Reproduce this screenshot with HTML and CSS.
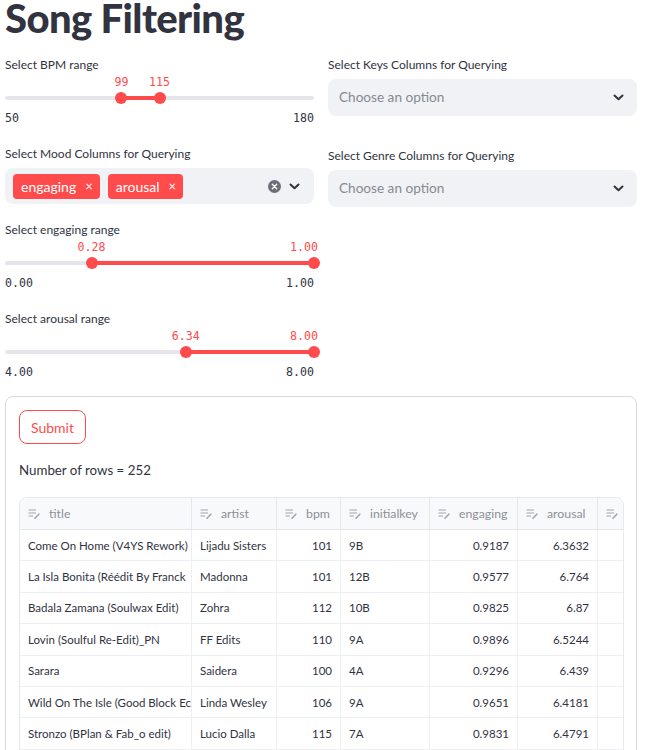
FILE: index.html
```html
<!DOCTYPE html>
<html>
<head>
<meta charset="utf-8">
<link rel="stylesheet" href="styles.css">
</head>
<body>
<div class="page">
  <h1 class="title">Song Filtering</h1>
  <div class="cols">
    <div class="col">
      <div class="slider-block first">
        <div class="label">Select BPM range</div>
        <div class="slider">
          <div class="track"><div class="fill" style="left:37.69%;width:12.31%"></div></div>
          <span class="val" style="left:37.69%">99</span>
          <span class="val" style="left:50%">115</span>
          <span class="thumb" style="left:37.69%"></span>
          <span class="thumb" style="left:50%"></span>
        </div>
        <div class="minmax"><span>50</span><span>180</span></div>
      </div>

      <div class="label mood-label">Select Mood Columns for Querying</div>
      <div class="multiselect">
        <div class="tags">
          <span class="tag">engaging<span class="x">×</span></span>
          <span class="tag">arousal<span class="x">×</span></span>
        </div>
        <div class="ms-icons">
          <span class="clear">
            <svg width="13" height="13" viewBox="0 0 13 13"><circle cx="6.5" cy="6.5" r="6.5" fill="#6c6e78"/><path d="M4.3 4.3 L8.7 8.7 M8.7 4.3 L4.3 8.7" stroke="#fff" stroke-width="1.4" stroke-linecap="round"/></svg>
          </span>
          <svg class="chev" width="11" height="7" viewBox="0 0 11 7"><path d="M1.5 1.5 L5.5 5.3 L9.5 1.5" fill="none" stroke="#31333f" stroke-width="2" stroke-linecap="round" stroke-linejoin="round"/></svg>
        </div>
      </div>

      <div class="slider-block eng">
        <div class="label">Select engaging range</div>
        <div class="slider">
          <div class="track"><div class="fill" style="left:28%;width:72%"></div></div>
          <span class="val" style="left:28%">0.28</span>
          <span class="val val-end">1.00</span>
          <span class="thumb" style="left:28%"></span>
          <span class="thumb" style="left:100%"></span>
        </div>
        <div class="minmax"><span>0.00</span><span>1.00</span></div>
      </div>

      <div class="slider-block aro">
        <div class="label">Select arousal range</div>
        <div class="slider">
          <div class="track"><div class="fill" style="left:58.5%;width:41.5%"></div></div>
          <span class="val" style="left:58.5%">6.34</span>
          <span class="val val-end">8.00</span>
          <span class="thumb" style="left:58.5%"></span>
          <span class="thumb" style="left:100%"></span>
        </div>
        <div class="minmax"><span>4.00</span><span>8.00</span></div>
      </div>
    </div>

    <div class="col">
      <div class="label keys-label">Select Keys Columns for Querying</div>
      <div class="select">
        <span class="placeholder">Choose an option</span>
        <svg class="chev" width="11" height="7" viewBox="0 0 11 7"><path d="M1.5 1.5 L5.5 5.3 L9.5 1.5" fill="none" stroke="#31333f" stroke-width="2" stroke-linecap="round" stroke-linejoin="round"/></svg>
      </div>
      <div class="label genre-label">Select Genre Columns for Querying</div>
      <div class="select">
        <span class="placeholder">Choose an option</span>
        <svg class="chev" width="11" height="7" viewBox="0 0 11 7"><path d="M1.5 1.5 L5.5 5.3 L9.5 1.5" fill="none" stroke="#31333f" stroke-width="2" stroke-linecap="round" stroke-linejoin="round"/></svg>
      </div>
    </div>
  </div>

  <div class="form">
    <button class="submit">Submit</button>
    <div class="rows-count">Number of rows = 252</div>
    <div class="grid">
      <div class="row head">
        <div class="c"><svg class="ic" width="12" height="10" viewBox="0 0 12 10"><path d="M0.5 1 H8 M0.5 4 H8 M0.5 7 H5" stroke="#a3a5ad" stroke-width="1.2"/><path d="M7 9.3 L10.8 5.2" stroke="#a3a5ad" stroke-width="1.6" stroke-linecap="round"/></svg>title</div>
        <div class="c"><svg class="ic" width="12" height="10" viewBox="0 0 12 10"><path d="M0.5 1 H8 M0.5 4 H8 M0.5 7 H5" stroke="#a3a5ad" stroke-width="1.2"/><path d="M7 9.3 L10.8 5.2" stroke="#a3a5ad" stroke-width="1.6" stroke-linecap="round"/></svg>artist</div>
        <div class="c"><svg class="ic" width="12" height="10" viewBox="0 0 12 10"><path d="M0.5 1 H8 M0.5 4 H8 M0.5 7 H5" stroke="#a3a5ad" stroke-width="1.2"/><path d="M7 9.3 L10.8 5.2" stroke="#a3a5ad" stroke-width="1.6" stroke-linecap="round"/></svg>bpm</div>
        <div class="c"><svg class="ic" width="12" height="10" viewBox="0 0 12 10"><path d="M0.5 1 H8 M0.5 4 H8 M0.5 7 H5" stroke="#a3a5ad" stroke-width="1.2"/><path d="M7 9.3 L10.8 5.2" stroke="#a3a5ad" stroke-width="1.6" stroke-linecap="round"/></svg>initialkey</div>
        <div class="c"><svg class="ic" width="12" height="10" viewBox="0 0 12 10"><path d="M0.5 1 H8 M0.5 4 H8 M0.5 7 H5" stroke="#a3a5ad" stroke-width="1.2"/><path d="M7 9.3 L10.8 5.2" stroke="#a3a5ad" stroke-width="1.6" stroke-linecap="round"/></svg>engaging</div>
        <div class="c"><svg class="ic" width="12" height="10" viewBox="0 0 12 10"><path d="M0.5 1 H8 M0.5 4 H8 M0.5 7 H5" stroke="#a3a5ad" stroke-width="1.2"/><path d="M7 9.3 L10.8 5.2" stroke="#a3a5ad" stroke-width="1.6" stroke-linecap="round"/></svg>arousal</div>
        <div class="c"><svg class="ic" width="12" height="10" viewBox="0 0 12 10"><path d="M0.5 1 H8 M0.5 4 H8 M0.5 7 H5" stroke="#a3a5ad" stroke-width="1.2"/><path d="M7 9.3 L10.8 5.2" stroke="#a3a5ad" stroke-width="1.6" stroke-linecap="round"/></svg></div>
      </div>
      <div class="row"><div class="c">Come On Home (V4YS Rework)</div><div class="c">Lijadu Sisters</div><div class="c num">101</div><div class="c">9B</div><div class="c num">0.9187</div><div class="c num">6.3632</div><div class="c"></div></div>
      <div class="row"><div class="c">La Isla Bonita (Réédit By Franck</div><div class="c">Madonna</div><div class="c num">101</div><div class="c">12B</div><div class="c num">0.9577</div><div class="c num">6.764</div><div class="c"></div></div>
      <div class="row"><div class="c">Badala Zamana (Soulwax Edit)</div><div class="c">Zohra</div><div class="c num">112</div><div class="c">10B</div><div class="c num">0.9825</div><div class="c num">6.87</div><div class="c"></div></div>
      <div class="row"><div class="c">Lovin (Soulful Re-Edit)_PN</div><div class="c">FF Edits</div><div class="c num">110</div><div class="c">9A</div><div class="c num">0.9896</div><div class="c num">6.5244</div><div class="c"></div></div>
      <div class="row"><div class="c">Sarara</div><div class="c">Saidera</div><div class="c num">100</div><div class="c">4A</div><div class="c num">0.9296</div><div class="c num">6.439</div><div class="c"></div></div>
      <div class="row"><div class="c">Wild On The Isle (Good Block Ec</div><div class="c">Linda Wesley</div><div class="c num">106</div><div class="c">9A</div><div class="c num">0.9651</div><div class="c num">6.4181</div><div class="c"></div></div>
      <div class="row"><div class="c">Stronzo (BPlan &amp; Fab_o edit)</div><div class="c">Lucio Dalla</div><div class="c num">115</div><div class="c">7A</div><div class="c num">0.9831</div><div class="c num">6.4791</div><div class="c"></div></div>
    </div>
  </div>
</div>
</body>
</html>
```

FILE: styles.css
```css
* { box-sizing: border-box; }
html, body { margin: 0; padding: 0; background: #fff; overflow: hidden; }
body {
  font-family: Lato, "Liberation Sans", sans-serif;
  color: #31333f;
  width: 650px;
  height: 750px;
}
.page { padding: 0 13px 0 5px; }
.title {
  margin: -6px 0 0 0;
  height: 59.5px;
  font-size: 40px;
  line-height: 48px;
  font-weight: 900;
  letter-spacing: -0.6px;
  color: #31333f;
}
.cols { display: flex; gap: 14px; }
.col { width: 309px; display: flex; flex-direction: column; }
.label { font-size: 12px; line-height: 21px; height: 21px; color: #31333f; }

.slider-block { display: flex; flex-direction: column; }
.slider { position: relative; height: 32px; }
.track {
  position: absolute; left: 0; right: 0; top: 21px; height: 4px;
  background: #e4e6ec; border-radius: 2px;
}
.fill { position: absolute; top: 0; height: 4px; background: #ff4b4b; }
.thumb {
  position: absolute; top: 17px; width: 12px; height: 12px; margin-left: -6px;
  border-radius: 50%; background: #ff4b4b;
}
.val {
  position: absolute; top: 0; height: 14px; line-height: 14px;
  transform: translateX(-50%);
  font-family: "DejaVu Sans Mono", "Liberation Mono", monospace;
  font-size: 11.6px; color: #ff4b4b;
}
.val.val-end { left: auto; right: -4px; transform: none; }
.minmax {
  display: flex; justify-content: space-between;
  margin-top: 4px; height: 14px; line-height: 14px;
  font-family: "DejaVu Sans Mono", "Liberation Mono", monospace;
  font-size: 11.6px; color: #31333f;
}
.mood-label { margin-top: 18px; }
.multiselect {
  margin-top: 4.5px; height: 36px; border-radius: 8px; background: #f0f2f6;
  display: flex; align-items: center; justify-content: space-between;
  padding: 0 14px 0 8px;
}
.tags { display: flex; gap: 8px; }
.tag {
  display: inline-flex; align-items: center; height: 25px;
  padding: 0 7px 0 8px; border-radius: 4px; background: #ff4b4b; color: #fff;
  font-size: 14px;
}
.tag .x { margin-left: 9px; font-size: 13px; }
.ms-icons { display: flex; align-items: center; gap: 8px; }
.clear { display: flex; }
.chev { display: block; }
.eng { margin-top: 14.5px; }
.aro { margin-top: 18px; }

.keys-label { margin-top: 0.5px; }
.genre-label { margin-top: 29.5px; }
.select {
  margin-top: 3.5px; height: 37px; border-radius: 8px; background: #f0f2f6;
  display: flex; align-items: center; justify-content: space-between;
  padding: 0 13px 0 11px;
}
.placeholder { font-size: 13.6px; color: #878993; }

.form {
  margin-top: 17.5px; border: 1px solid #d9d9dc; border-radius: 8px;
  padding: 13px 13px 0 13px; height: 400px;
}
.submit {
  display: block; height: 34px; width: 67px; border: 1px solid #ff4b4b;
  border-radius: 8px; background: #fff; color: #ff4b4b;
  font-family: Lato, "Liberation Sans", sans-serif; font-size: 14px; padding: 0;
}
.rows-count { margin-top: 16px; font-size: 13.3px; line-height: 20px; height: 20px; }
.grid {
  margin-top: 17px; border: 1px solid #e8e9ec; border-radius: 8px 8px 0 0;
  overflow: hidden; width: 605px;
}
.row {
  display: grid; grid-template-columns: 172px 85px 64px 89px 88px 80px 25px;
  height: 31.4px; border-bottom: 1px solid #eeeff2; font-size: 11.5px;
}
.row.head { height: 32px; background: #f8f9fb; color: #8d8f97; font-size: 12.3px; border-bottom-color: #e6e7ea; }
.c {
  border-right: 1px solid #eeeff2; padding: 0 8px 0 8px;
  display: flex; align-items: center; white-space: nowrap; overflow: hidden;
}
.c:last-child { border-right: none; }
.head .c { border-right-color: #e6e7ea; }
.c.num { justify-content: flex-end; }
.ic { flex: none; margin-right: 9px; }
```
